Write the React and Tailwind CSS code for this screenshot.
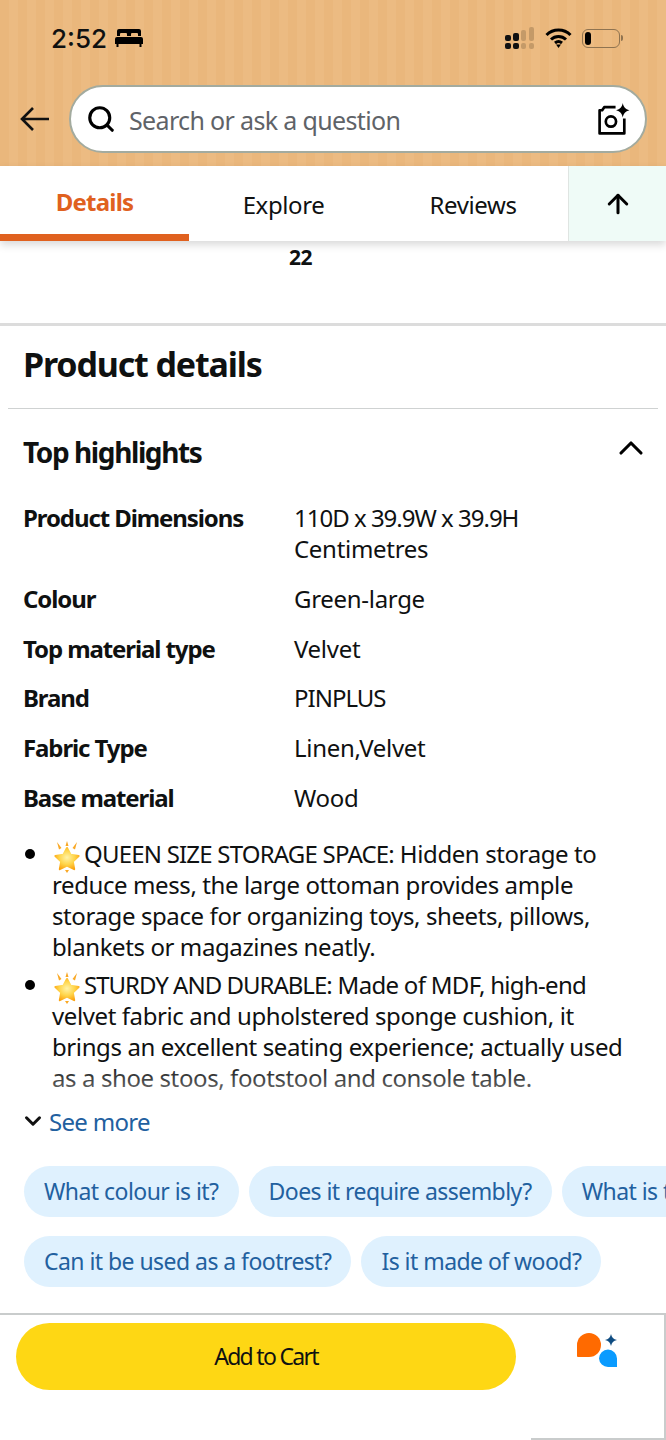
import React from 'react';
import { ArrowUp, ChevronDown, ChevronUp, Search } from 'lucide-react';

const specs = [
  { label: 'Product Dimensions', value: ['110D x 39.9W x 39.9H', 'Centimetres'] },
  { label: 'Colour', value: ['Green-large'] },
  { label: 'Top material type', value: ['Velvet'] },
  { label: 'Brand', value: ['PINPLUS'] },
  { label: 'Fabric Type', value: ['Linen,Velvet'] },
  { label: 'Base material', value: ['Wood'] },
];

const Star = () => (
  <svg viewBox="0 0 30 32" className="inline-block w-[30px] h-[32px] mr-[2px] -my-[6px] align-middle">
    <defs>
      <radialGradient id="starFill" cx="50%" cy="45%" r="60%">
        <stop offset="0%" stopColor="#fff3a8" />
        <stop offset="55%" stopColor="#ffd54a" />
        <stop offset="100%" stopColor="#fca311" />
      </radialGradient>
    </defs>
    <path d="M15 7l3.600 6.800 8 1.200-5.800 5.500 1.400 7.700-7.200-3.600-7.200 3.600 1.400-7.700-5.800-5.500 8-1.200z" fill="url(#starFill)" stroke="url(#starFill)" strokeWidth="2" strokeLinejoin="round" />
    <path d="M5 1l4.500 6-2.500 1.500zM25 1l-4.500 6 2.500 1.500zM15 0l1.500 5h-3zM15 32l-2-3h4z" fill="#f9a825" />
  </svg>
);

const Chip = ({ children }) => (
  <div className="shrink-0 h-[51px] px-[20px] flex items-center rounded-full bg-[#dff1fe] text-[#22609f] text-[23px] tracking-[-0.55px] whitespace-nowrap">
    {children}
  </div>
);

export default function App() {
  return (
    <div className="w-[666px] h-[1440px] overflow-hidden bg-white text-[#0f1111] font-['Noto_Sans',sans-serif] tracking-[-0.4px]">
      {/* Header */}
      <div className="h-[166px] bg-[#ebb97f] bg-[repeating-linear-gradient(90deg,#eab77c_0px,#eab77c_9px,#ecbb82_9px,#ecbb82_18px)]">
        <div className="h-[85px] pl-[51px] pr-[43px] pt-[22px] flex items-start justify-between">
          <div className="flex items-center gap-[8px] h-[32px]">
            <span className="text-[26px] font-medium font-['Inter',sans-serif] tracking-normal">2:52</span>
            <svg viewBox="0 0 28 20" className="w-[28px] h-[20px]">
              <path d="M4 1h20a2 2 0 0 1 2 2v5h-3V6a1 1 0 0 0-1-1h-5a1 1 0 0 0-1 1v2h-4V6a1 1 0 0 0-1-1H6a1 1 0 0 0-1 1v2H2V3a2 2 0 0 1 2-2z" fill="#000" />
              <path d="M2 9h24a2 2 0 0 1 2 2v5h-1.500v3h-2v-3H3.500v3h-2v-3H0v-5a2 2 0 0 1 2-2z" fill="#000" />
            </svg>
          </div>
          <div className="flex items-center gap-[10px] h-[32px]">
            <svg viewBox="0 0 30 22" className="w-[30px] h-[22px]">
              <rect x="0" y="8" width="6" height="6" rx="2" fill="#111" />
              <rect x="0" y="16" width="6" height="6" rx="2" fill="#111" />
              <rect x="8" y="6" width="6" height="8" rx="2" fill="#111" />
              <rect x="8" y="16" width="6" height="6" rx="2" fill="#111" />
              <rect x="16" y="3" width="5" height="11" rx="2" fill="#c49a68" />
              <rect x="16" y="16" width="5" height="6" rx="2" fill="#c49a68" />
              <rect x="24" y="0" width="5" height="14" rx="2" fill="#c49a68" />
              <rect x="24" y="16" width="5" height="6" rx="2" fill="#c49a68" />
            </svg>
            <svg viewBox="0 0 26 20" className="w-[27px] h-[20px]">
              <path d="M1 7a17 17 0 0 1 24 0M5.500 11.500a11 11 0 0 1 15 0M9.500 15a5.500 5.500 0 0 1 7 0" fill="none" stroke="#000" strokeWidth="3" />
              <path d="M10.500 16.500h5L13 20z" fill="#000" />
            </svg>
            <div className="flex items-center">
              <div className="w-[38px] h-[19px] rounded-[6px] border border-[#8f7350] p-[2px]">
                <div className="w-[6px] h-full rounded-[3px] bg-black" />
              </div>
              <div className="w-[2px] h-[6px] ml-[1px] rounded-r-sm bg-[#8f7350]" />
            </div>
          </div>
        </div>
        <div className="flex items-center pl-[19px] pr-[19px] gap-[18px]">
          <svg viewBox="0 0 32 26" className="shrink-0 w-[32px] h-[26px]">
            <path d="M30 13H3M14 2L3 13l11 11" fill="none" stroke="#111" strokeWidth="2.600" />
          </svg>
          <div className="flex-1 h-[68px] rounded-full bg-white border-2 border-[#a3ab9f] flex items-center pl-[15px] pr-[14px]">
            <Search size={30} strokeWidth={2.5} className="shrink-0 text-black" />
            <span className="ml-[13px] pt-[3px] text-[25px] text-[#5f6368] flex-1 tracking-[-0.65px]">Search or ask a question</span>
            <svg viewBox="0 0 34 34" className="w-[35px] h-[35px]">
              <path d="M19 5H8L6 8H3.500v22.500h24V16" fill="none" stroke="#000" strokeWidth="2.600" strokeLinejoin="round" />
              <circle cx="14.500" cy="19" r="5" fill="none" stroke="#000" strokeWidth="2.600" />
              <path d="M26 1c.8 4 2.500 6 6.500 7-4 1-5.700 3-6.500 7-.8-4-2.500-6-6.500-7 4-1 5.700-3 6.500-7z" fill="#000" />
            </svg>
          </div>
        </div>
      </div>

      {/* Tabs */}
      <div className="relative z-10 h-[75px] flex bg-white shadow-[0_4px_8px_rgba(0,0,0,0.15)]">
        <div className="w-[189px] h-full border-b-[7px] border-[#e0611f] flex justify-center pt-[18px] text-[#e0611f] text-[24px] font-bold tracking-[-0.8px]">
          Details
        </div>
        <div className="w-[189px] flex justify-center pt-[21px] text-[24px]">Explore</div>
        <div className="w-[190px] flex justify-center pt-[21px] text-[24px]">Reviews</div>
        <div className="flex-1 border-l border-[#dfe5e2] bg-[#effbf7] flex items-center justify-center">
          <ArrowUp size={30} strokeWidth={2.4} className="text-black" />
        </div>
      </div>

      <div className="h-[85px] border-b-[3px] border-[#dcdcdc] pl-[289px] pt-[2px] text-[21px] font-bold leading-[28px]">
        22
      </div>

      {/* Product details */}
      <h1 className="pl-[23px] pt-[16px] pb-[22px] text-[34px] leading-[44px] font-bold tracking-[-1.15px]">Product details</h1>
      <div className="mx-[8px] h-px bg-[#cfd2d2]" />

      <div className="pl-[23px] pr-[15px] pt-[24px] flex items-center justify-between">
        <h2 className="text-[28px] leading-[38px] font-bold tracking-[-1.4px]">Top highlights</h2>
        <ChevronUp size={40} strokeWidth={1.9} className="-mt-[12px] -mb-[4px] text-black" />
      </div>

      <div className="mt-[31px] pl-[23px] flex flex-col gap-[18.8px] text-[24px] leading-[31px]">
        {specs.map((row) => (
          <div key={row.label} className="flex">
            <div className="w-[271px] font-bold tracking-[-1.1px]">{row.label}</div>
            <div>
              {row.value.map((line) => (
                <div key={line} className={/^[A-Z0-9]+( x|$)/.test(line) ? 'tracking-[-1px]' : 'tracking-[-0.3px]'}>{line}</div>
              ))}
            </div>
          </div>
        ))}
      </div>

      {/* Bullets, cut off and faded at the bottom */}
      <div className="relative mt-[25px] h-[255px] overflow-hidden text-[24px] leading-[31px]">
        <div className="flex">
          <div className="w-[52px] pl-[25px] pt-[11px] shrink-0"><div className="w-[10px] h-[10px] rounded-full bg-black" /></div>
          <p className="whitespace-nowrap">
            <Star /><span className="tracking-[-0.8px]">QUEEN SIZE STORAGE SPACE:</span> Hidden storage to<br />
            reduce mess, the large ottoman provides ample<br />
            storage space for organizing toys, sheets, pillows,<br />
            blankets or magazines neatly.
          </p>
        </div>
        <div className="flex mt-[7px]">
          <div className="w-[52px] pl-[25px] pt-[11px] shrink-0"><div className="w-[10px] h-[10px] rounded-full bg-black" /></div>
          <p className="whitespace-nowrap">
            <Star /><span className="tracking-[-1px]">STURDY AND DURABLE:</span> <span className="tracking-[-0.7px]">Made of MDF, high-end</span><br />
            velvet fabric and upholstered sponge cushion, it<br />
            brings an excellent seating experience; actually used<br />
            as a shoe stoos, footstool and console table.
          </p>
        </div>
        <div className="absolute left-0 right-0 bottom-0 h-[30px] bg-gradient-to-b from-transparent to-white/40" />
      </div>

      <div className="mt-[13px] pl-[20px] flex items-center gap-[3px] text-[#22609f] text-[24px] leading-[31px] tracking-[-0.7px]">
        <ChevronDown size={26} strokeWidth={2.8} className="text-[#111]" />
        See more
      </div>

      {/* Question chips */}
      <div className="mt-[29px] pl-[24px] flex gap-[10px] overflow-hidden">
        <Chip>What colour is it?</Chip>
        <Chip>Does it require assembly?</Chip>
        <Chip>What is the size?</Chip>
      </div>
      <div className="mt-[19px] pl-[24px] flex gap-[10px]">
        <Chip>Can it be used as a footrest?</Chip>
        <Chip>Is it made of wood?</Chip>
      </div>

      {/* Bottom bar */}
      <div className="mt-[26px] h-[127px] flex border-t-2 border-[#c9cccc]">
        <div className="w-[531px] pl-[16px] pt-[8px]">
          <div className="w-[500px] h-[67px] rounded-full bg-[#fed714] flex items-center justify-center text-[23px] tracking-[-1.7px]">
            Add to Cart
          </div>
        </div>
        <div className="flex-1 border-r-2 border-b-2 border-[#c9cccc] pl-[45px] pt-[17px]">
          <svg viewBox="0 0 42 36" className="w-[42px] h-[36px]">
            <path d="M1 24V13a12 12 0 1 1 12 12H2a1 1 0 0 1-1-1z" fill="#ff6a00" />
            <path d="M23 26.500a9 9 0 1 1 18 0V35h-9a9 9 0 0 1-9-8.500z" fill="#0a9bff" />
            <path d="M35 2c.7 3.500 2.400 5.300 6 6-3.600.7-5.300 2.500-6 6-.7-3.500-2.400-5.300-6-6 3.600-.7 5.300-2.500 6-6z" fill="#0f4c81" />
          </svg>
        </div>
      </div>
    </div>
  );
}
